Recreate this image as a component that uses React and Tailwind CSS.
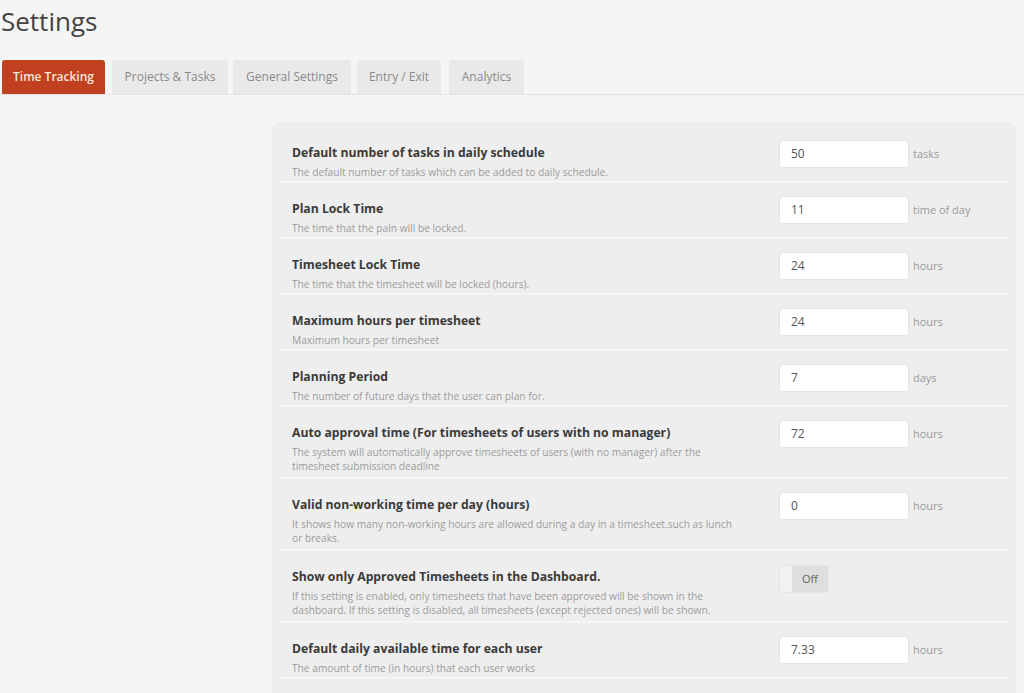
import React from 'react'

const tabs = [
  { label: 'Time Tracking', cls: 'w-[103px]' },
  { label: 'Projects & Tasks', cls: 'ml-[7px] w-[116px]' },
  { label: 'General Settings', cls: 'ml-[5px] w-[118px]' },
  { label: 'Entry / Exit', cls: 'ml-[6px] w-[84px]' },
  { label: 'Analytics', cls: 'ml-[8px] w-[75px]' },
]

const settings = [
  { title: 'Default number of tasks in daily schedule', desc: 'The default number of tasks which can be added to daily schedule.', value: '50', unit: 'tasks', h: 'h-[56px]' },
  { title: 'Plan Lock Time', desc: 'The time that the paln will be locked.', value: '11', unit: 'time of day', h: 'h-[56px]' },
  { title: 'Timesheet Lock Time', desc: 'The time that the timesheet will be locked (hours).', value: '24', unit: 'hours', h: 'h-[56px]' },
  { title: 'Maximum hours per timesheet', desc: 'Maximum hours per timesheet', value: '24', unit: 'hours', h: 'h-[56px]' },
  { title: 'Planning Period', desc: 'The number of future days that the user can plan for.', value: '7', unit: 'days', h: 'h-[56px]' },
  { title: 'Auto approval time (For timesheets of users with no manager)', desc: 'The system will automatically approve timesheets of users (with no manager) after the timesheet submission deadline', value: '72', unit: 'hours', h: 'h-[72px]' },
  { title: 'Valid non-working time per day (hours)', desc: 'It shows how many non-working hours are allowed during a day in a timesheet.such as lunch or breaks.', value: '0', unit: 'hours', h: 'h-[72px]' },
  { title: 'Show only Approved Timesheets in the Dashboard.', desc: 'If this setting is enabled, only timesheets that have been approved will be shown in the dashboard. If this setting is disabled, all timesheets (except rejected ones) will be shown.', toggle: true, h: 'h-[72px]' },
  { title: 'Default daily available time for each user', desc: 'The amount of time (in hours) that each user works', value: '7.33', unit: 'hours', h: 'h-[56px]' },
]

function SettingRow({ item }) {
  return (
    <div className={`flex border-b border-[#f9f9f9] ${item.h}`}>
      <div className="w-[499px] shrink-0 pl-3 pt-[17px]">
        <div className="text-[12.2px] font-bold leading-5 text-[#3a3a3a]">{item.title}</div>
        <div className="mt-[2px] max-w-[448px] text-[10.2px] leading-[14px] text-[#9c9c9c]">{item.desc}</div>
      </div>
      <div className="flex items-start pt-[14px]">
        {item.toggle ? (
          <div className="mt-[1px] flex h-[28px] w-[50px] overflow-hidden rounded-[3px] border border-[#e4e4e4]">
            <div className="w-[12px] bg-[#f1f1f1]" />
            <div className="flex flex-1 items-center justify-center bg-[#dedede] text-[11px] text-[#666]">Off</div>
          </div>
        ) : (
          <>
            <div className="flex h-[28px] w-[130px] items-center rounded-[3px] border border-[#e2e2e2] bg-white pl-[11px] text-[12px] text-[#555]">
              {item.value}
            </div>
            <div className="ml-[4px] flex h-[28px] items-center text-[11px] text-[#9a9a9a]">{item.unit}</div>
          </>
        )}
      </div>
    </div>
  )
}

export default function App() {
  return (
    <div className="h-[693px] overflow-hidden bg-[#f5f5f5]" style={{ fontFamily: '"Open Sans", sans-serif' }}>
      <h1 className="pl-[1px] pt-[4px] text-[26px] leading-[34px] text-[#444]">Settings</h1>

      <div className="mt-[22px] flex border-b border-[#e3e3e3] pl-[2px]">
        {tabs.map((t, i) => (
          <div
            key={t.label}
            className={
              i === 0
                ? `flex h-[34px] items-center justify-center rounded-t-[3px] bg-[#c1401f] text-[12px] font-semibold text-[#fbe6dc] ${t.cls}`
                : `flex h-[34px] items-center justify-center rounded-t-[3px] bg-[#e9e9e9] text-[12px] text-[#8a8a8a] ${t.cls}`
            }
          >
            {t.label}
          </div>
        ))}
      </div>

      <div className="ml-[272px] mr-[8px] mt-[27px] rounded-[8px] bg-[#eeeeee] px-2 pt-[4px] pb-6">
        {settings.map((s) => (
          <SettingRow key={s.title} item={s} />
        ))}
      </div>
    </div>
  )
}
